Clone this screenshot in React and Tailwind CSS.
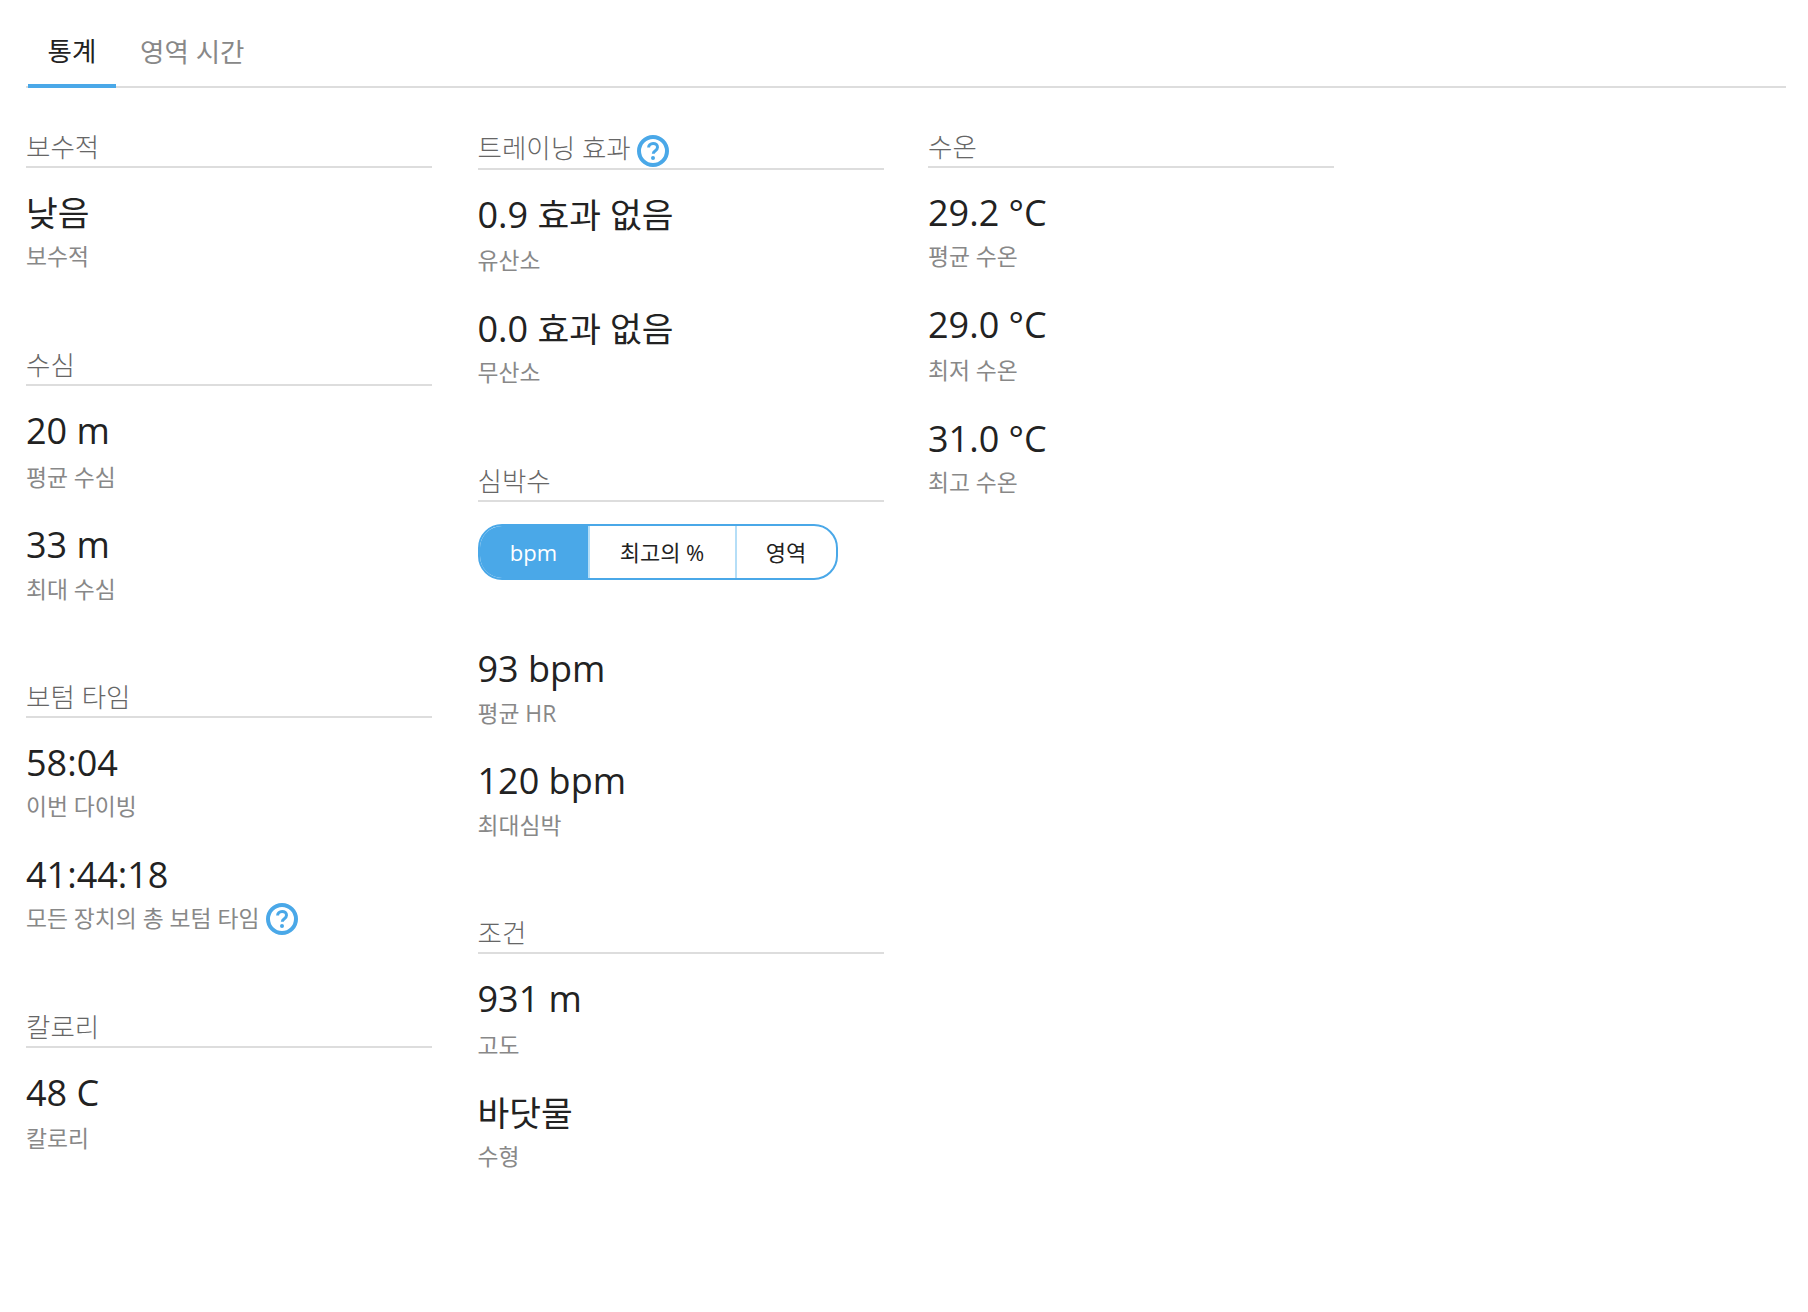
const Help = ({ className = "" }) => (
  <svg width="32" height="32" viewBox="0 0 32 32" className={className}>
    <circle cx="16" cy="16" r="14" fill="none" stroke="#4aa8e8" strokeWidth="4" />
    <path d="M11.6 12.6c0-2.6 2-4.2 4.5-4.2 2.6 0 4.4 1.6 4.4 3.8 0 1.9-1.1 2.8-2.4 3.7-1.2.8-1.8 1.4-1.8 2.9" fill="none" stroke="#4aa8e8" strokeWidth="3" />
    <circle cx="16" cy="23" r="2" fill="#4aa8e8" />
  </svg>
);

const K = ({ children }) => <span className="text-[34.5px]">{children}</span>;

const Heading = ({ children, help }) => (
  <div className={`flex items-center gap-[6px] border-b-2 border-[#dddddd] pb-1 text-[26.5px] font-light text-[#666666] ${help ? "h-[38px]" : "h-[36px]"}`}>
    <span className="leading-[30px]">{children}</span>
    {help && <Help className="mt-[5px]" />}
  </div>
);

const Stat = ({ value, label, help, gapClass = "mt-[6px]", cls = "h-[112px]" }) => (
  <div className={cls}>
    <div className="text-[36px] leading-[48px] text-[#222222]">{value}</div>
    <div className={`flex items-center gap-[7px] text-[22.8px] leading-[30px] text-[#888888] ${gapClass}`}>
      <span>{label}</span>
      {help && <Help />}
    </div>
  </div>
);

const Section = ({ title, help, children, cls, bodyCls = "pt-[21px]" }) => (
  <section className={cls}>
    <Heading help={help}>{title}</Heading>
    <div className={bodyCls}>{children}</div>
  </section>
);

export default function App() {
  return (
    <div className="h-[1312px] w-[1808px] bg-white pl-[26px] pr-[22px]" style={{ fontFamily: '"Open Sans","Noto Sans CJK KR",sans-serif' }}>
      <div className="flex h-[88px] border-b-2 border-[#dddddd]">
        <div className="ml-[2px] flex h-[88px] w-[88px] items-center justify-center border-b-4 border-[#4aa8e8] pt-[20px] text-[26.5px] text-[#222222]">통계</div>
        <div className="ml-[24px] flex h-[86px] items-center pt-[20px] text-[26.5px] text-[#888888]">영역 시간</div>
      </div>
      <div className="flex pt-[44px]">
        <div className="w-[406px]">
          <Section title="보수적" cls="h-[218px]">
            <Stat value={<K>낮음</K>} label="보수적" gapClass="mt-[5px]" />
          </Section>
          <Section title="수심" cls="h-[332px]">
            <Stat value="20 m" label="평균 수심" cls="h-[114px]" gapClass="mt-[8px]" />
            <Stat value="33 m" label="최대 수심" />
          </Section>
          <Section title="보텀 타임" cls="h-[330px]">
            <Stat value="58:04" label="이번 다이빙" gapClass="mt-[5px]" />
            <Stat value="41:44:18" label="모든 장치의 총 보텀 타임" help gapClass="mt-[4px]" />
          </Section>
          <Section title="칼로리">
            <Stat value="48 C" label="칼로리" gapClass="mt-[7px]" />
          </Section>
        </div>
        <div className="ml-[45.5px] w-[406px]">
          <Section title="트레이닝 효과" help cls="h-[334px]">
            <Stat value={<>0.9 <K>효과 없음</K></>} label="유산소" cls="h-[114px]" gapClass="mt-[7px]" />
            <Stat value={<>0.0 <K>효과 없음</K></>} label="무산소" gapClass="mt-[5px]" />
          </Section>
          <section className="h-[452px]">
            <Heading>심박수</Heading>
            <div className="mt-[22px] flex h-[56px] w-[360px] overflow-hidden rounded-[24px] border-2 border-[#4aa8e8] text-[22px]">
              <div className="flex w-[108px] items-center justify-center bg-[#4aa8e8] text-white">bpm</div>
              <div className="flex w-[147px] items-center justify-center border-l-2 border-[#b5def7] text-[#222222]">최고의 %</div>
              <div className="flex flex-1 items-center justify-center border-l-2 border-[#b5def7] text-[#222222]">영역</div>
            </div>
            <div className="pt-[65px]">
              <Stat value="93 bpm" label="평균 HR" />
              <Stat value="120 bpm" label="최대심박" />
            </div>
          </section>
          <Section title="조건">
            <Stat value="931 m" label="고도" cls="h-[114px]" gapClass="mt-[8px]" />
            <Stat value={<K>바닷물</K>} label="수형" gapClass="mt-[5px]" />
          </Section>
        </div>
        <div className="ml-[44.5px] w-[406px]">
          <Section title="수온">
            <Stat value="29.2 °C" label="평균 수온" gapClass="mt-[5px]" />
            <Stat value="29.0 °C" label="최저 수온" cls="h-[114px]" gapClass="mt-[7px]" />
            <Stat value="31.0 °C" label="최고 수온" gapClass="mt-[5px]" />
          </Section>
        </div>
      </div>
    </div>
  );
}
